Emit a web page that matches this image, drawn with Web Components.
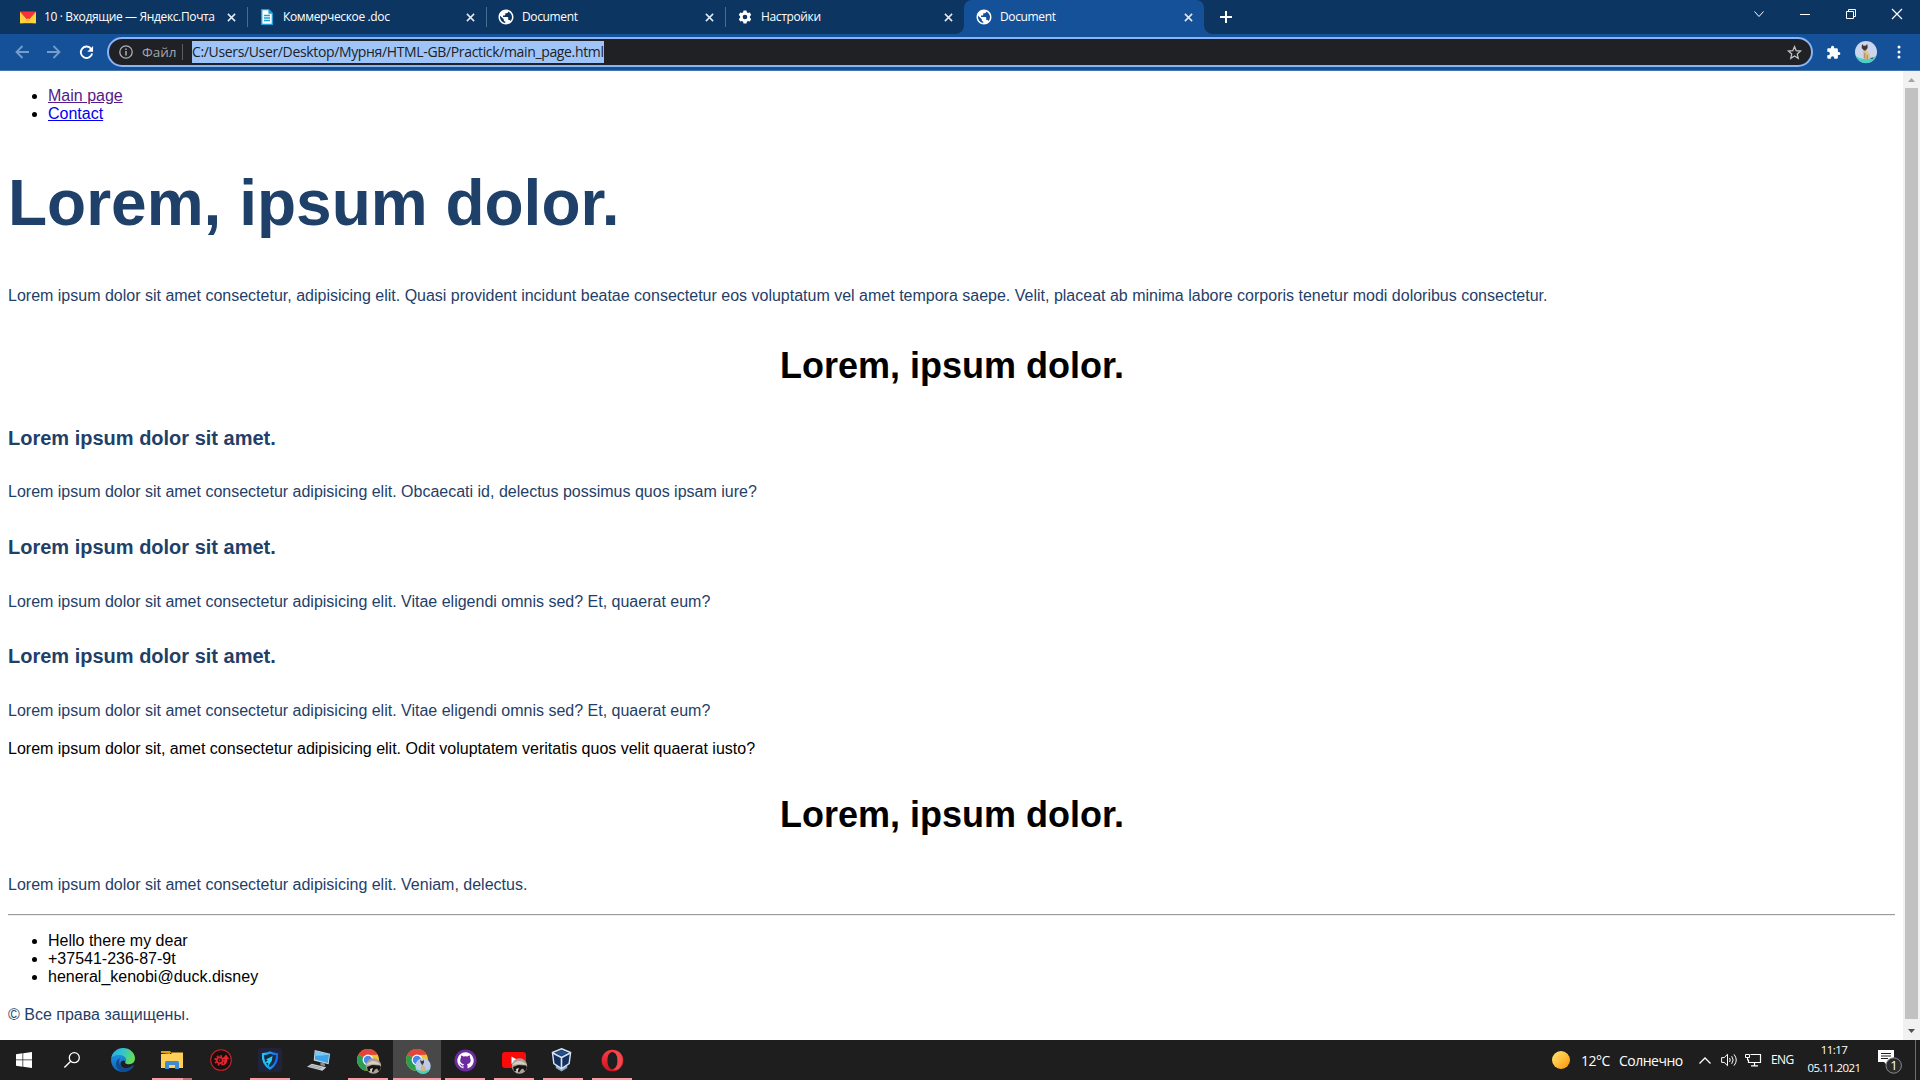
<!DOCTYPE html>
<html lang="ru">
<head>
<meta charset="utf-8">
<title>Document</title>
<style>
html,body{margin:0;height:100%;overflow:hidden;background:#fff}
</style>
</head>
<body>
<desktop-screen></desktop-screen>
<script>
const UI = '"Open Sans","Noto Sans",sans-serif';
const chromeLogo = `<circle cx="12" cy="12" r="11" fill="#f7c02d"/><path d="M12 12 2.5 6.5A11 11 0 0 1 21.5 6.5L12 7z" fill="#e2453a"/><path d="M12 12 2.5 6.5A11 11 0 0 0 12 23L16.5 14.6z" fill="#2c9e54"/><path d="M2.5 6.5A11 11 0 0 1 21.5 6.5H12z" fill="#e2453a"/><circle cx="12" cy="12" r="5.4" fill="#fff"/><circle cx="12" cy="12" r="4.2" fill="#4787ee"/>`;
const photo = `<circle cx="17.5" cy="18" r="7.7" fill="#aaa097"/><path d="M10 17q7-8 15 0l-7-1z" fill="#d6cdc4"/><path d="m11 19 5-2 8 .5 1 2-2 4-2-3-2 1-2 3-2-2-3 1z" fill="#171413"/><path d="m14 21 3-1-2 5z" fill="#e9dcc8"/>`;
const ICONS = {
mail:['0 0 16 16',`<path d="M0 1h16v14H0z" fill="#fc3"/><path d="M0 1h16L8 12z" fill="#f8323a"/><path d="M0 3v12h3l5-6 5 6h3V3L8 12z" fill="#ffd33c"/>`],
doc:['0 0 16 16',`<path d="M2 0h8l4 4v12H2z" fill="#1c9fd8"/><path d="M3.4 1.3h6v3.4h3.3v10H3.4z" fill="#fff"/><path d="M5 6.5h6M5 9h6M5 11.5h6" stroke="#1c9fd8" stroke-width="1.3"/>`],
globe:['1.300 1.300 21.400 21.400',`<path fill="#fff" d="M12 2C6.480 2 2 6.480 2 12s4.480 10 10 10 10-4.480 10-10S17.520 2 12 2zm-1 17.930c-3.950-.490-7-3.850-7-7.930 0-.620.080-1.210.210-1.790L9 15v1c0 1.100.9 2 2 2v1.930zm6.900-2.540c-.260-.810-1-1.390-1.900-1.390h-1v-3c0-.550-.450-1-1-1H8v-2h2c.550 0 1-.450 1-1V7h2c1.100 0 2-.9 2-2v-.410c2.930 1.190 5 4.060 5 7.410 0 2.080-.8 3.970-2.100 5.390z"/>`],
gear:['0 0 24 24',`<path fill="#fff" fill-rule="evenodd" d="M9.5 1h5l.7 3 2 1.100 3-1 2.500 4.300-2.300 2.100v2.900l2.300 2.200-2.500 4.300-3-1-2 1.200-.7 2.900h-5l-.7-2.900-2-1.200-3 1-2.500-4.300 2.300-2.200v-2.900L1.300 8.400l2.500-4.300 3 1 2-1.100zM12 8a4 4 0 1 0 0 8 4 4 0 0 0 0-8z"/>`],
x:['0 0 10 10',`<path d="m1 1 8 8M9 1 1 9" stroke="#e4ebf3" stroke-width="1.7"/>`],
plus:['0 0 12 12',`<path d="M6 0v12M0 6h12" stroke="#fff" stroke-width="2"/>`],
chev:['0 0 10 6',`<path d="m.5.5 4.500 5 4.500-5" stroke="#fff" fill="none"/>`],
min:['0 0 10 10',`<path d="M0 5.500h10" stroke="#fff"/>`],
restore:['0 0 10 10',`<path d="M.5 2.500h7v7h-7zM2.500 2.500v-2h7v7h-2" stroke="#fff" fill="none"/>`],
close:['0 0 10 10',`<path d="m0 0 10 10M10 0 0 10" stroke="#fff" stroke-width="1.200"/>`],
back:['0 0 14 14',`<path d="M14 7H1.500M7.500 1l-6 6 6 6" stroke="#739dcb" stroke-width="1.800" fill="none"/>`],
fwd:['0 0 14 14',`<path d="M0 7h12.500M6.500 1l6 6-6 6" stroke="#739dcb" stroke-width="1.800" fill="none"/>`],
reload:['0 0 16 16',`<path d="M13 4.200A6.100 6.100 0 1 0 14 9" stroke="#fff" stroke-width="2" fill="none"/><path d="M15 1v6.200H8.800z" fill="#fff"/>`],
info:['0 0 14 14',`<circle cx="7" cy="7" r="6.200" fill="none" stroke="#aeb1b5" stroke-width="1.300"/><path d="M7 6v4.500M7 3.500v1.400" stroke="#aeb1b5" stroke-width="1.500"/>`],
star:['0 0 24 24',`<path d="m12 2.500 2.700 6.600 7 .6-5.300 4.700 1.600 7L12 17.700l-6 3.700 1.600-7-5.300-4.700 7-.6z" fill="none" stroke="#c3c5c8" stroke-width="2"/>`],
puzzle:['0 0 24 24',`<path fill="#fff" d="M20.500 11H19V7a2 2 0 0 0-2-2h-4V3.500a2.500 2.500 0 0 0-5 0V5H4a2 2 0 0 0-2 2v3.800h1.500a2.700 2.700 0 0 1 0 5.400H2V20a2 2 0 0 0 2 2h3.800v-1.500a2.700 2.700 0 0 1 5.400 0V22H17a2 2 0 0 0 2-2v-4h1.500a2.500 2.500 0 0 0 0-5z"/>`],
avatar:['0 0 22 22',`<circle cx="11" cy="11" r="11" fill="#ccd5ee"/><path d="M.7 15q5 3.500 10.300 2.800T21.300 15A11 11 0 0 1 .7 15z" fill="#4ccfc4"/><path d="M8.500 7h2.500q1 2 1.500 3.500 3.300 2.500 2.500 7.500H8.500q-1.500-4 0-11z" fill="#dcc193"/><path d="m7 3 1.500 1.800h2L12.300 3l.4 4-2.200 2.500h-1.500L6.700 7z" fill="#42372f"/><path d="M9.800 12v5.500M12.200 14v4" stroke="#8e7450" stroke-width=".8"/><path d="m14.500 17.300 4-.8-1 1.500z" fill="#4b443d"/>`],
dots:['0 0 4 14',`<circle cx="2" cy="2" r="1.500" fill="#fff"/><circle cx="2" cy="7" r="1.500" fill="#fff"/><circle cx="2" cy="12" r="1.500" fill="#fff"/>`],
win:['0 0 16 16',`<path fill="#fff" d="m0 2.200 6.500-.9v6.300H0zM7.200 1.200 16 0v7.600H7.200zM0 8.300h6.500v6.400L0 13.800zM7.200 8.300H16V16l-8.800-1.200z"/>`],
search:['0 0 16 16',`<circle cx="10.300" cy="5.700" r="5" fill="none" stroke="#fff" stroke-width="1.300"/><path d="M6.700 9.300.4 15.600" stroke="#fff" stroke-width="1.400"/>`],
edge:['0 0 24 24',`<defs><linearGradient id="a" x1="0" y1="0" x2="1" y2=".3"><stop offset="0" stop-color="#27a9e8"/><stop offset=".5" stop-color="#31c3d0"/><stop offset="1" stop-color="#63dc5a"/></linearGradient><linearGradient id="b" x1="0" y1="0" x2="0" y2="1"><stop offset="0" stop-color="#1d8fdc"/><stop offset="1" stop-color="#1160b8"/></linearGradient></defs><path d="M0 11C1 4 6 0 12 0c7 0 12 5 12 10.500 0 3.500-2.500 5.700-6 5.700-3 0-4.700-1.200-3.500-2.700C16 11.500 13 7.500 8.800 7.500 4.500 7.500 1 9 0 11z" fill="url(#a)"/><path d="M0 11.500C.5 8.500 4 7 8 7c4.500 0 7.300 2.500 7.200 5.200-.1.800-.9 1.300-.9 1.300-1.500-2-4.300-1-4.800 1.500C9 19 13 21 17 20c2-.4 3.700-1.600 4.800-2.500.8-.3 1 .2.600.8C20 22 16 24 12 24 5 24 0 18.500 0 11.500z" fill="url(#b)"/><path d="M9.300 10.200C6.500 13.500 8.500 20 15.500 20.200c2.500 0 4.300-.8 5.500-1.700.8-.5 1.500-.6 1.200.2C20 22 17 23.800 13 24 8 23.500 4.700 19.500 5 15.500c.2-2.800 2-4.600 4.300-5.300z" fill="#0e4c94"/>`],
folder:['0 0 22 18',`<path d="M0 0h9l2 2H0z" fill="#d08d06"/><path d="M0 2V0h9v3z" fill="#e09e0c"/><path d="M0 3h10l1-1.500h11V17H0z" fill="#ffcf58"/><path d="M4 18v-6.500q0-1.500 1.500-1.500h11q1.500 0 1.500 1.500V18h-4v-4H8v4z" fill="#3d8bd2"/>`],
red:['0 0 22 22',`<circle cx="11" cy="11" r="10.300" fill="#190d0e" stroke="#c8232a" stroke-width="1.100"/><circle cx="9.700" cy="11.300" r="3" fill="none" stroke="#e0242d" stroke-width="1.700"/><circle cx="9.700" cy="11.300" r="4.500" fill="none" stroke="#e0242d" stroke-width="1.700" stroke-dasharray="1.800 1.734"/><circle cx="9.700" cy="11.300" r=".8" fill="#e0242d"/><path d="M11.500 16.500q3.500-2 3-6.500H12.500l3.500-4.500 3.200 4.500h-1.900q.3 6-5.800 6.500z" fill="#e6262e"/>`],
shield:['0 0 24 24',`<rect width="24" height="24" rx="3" fill="#20243a"/><defs><linearGradient id="h"><stop stop-color="#22c6f5"/><stop offset="1" stop-color="#1466f2"/></linearGradient></defs><path d="M12 4.500q3 1.300 7 1.700.8 9.800-7 14.300-7.800-4.500-7-14.300 4-.4 7-1.700z" fill="#182a47" stroke="url(#h)" stroke-width="2.200"/><path d="M14.500 8 8 11.500l1.800.8L6.800 15l3.500-.3-.3 4 3.800-6z" fill="#25d0ef"/>`],
pc:['0 0 26 22',`<path d="m8 0 16 4-1.500 11L7 11z" fill="#cfd9e2"/><path d="m9 1.300 14 3.400-1.300 9L8 10z" fill="#3ea5e9"/><path d="m9 1.300 14 3.400-7 1L8.500 6z" fill="#79c8f7"/><path d="m14 13 4 1 1 3-5-1z" fill="#8b949b"/><path d="m5 14.500 15 3.500-4 3.800L0 17.500z" fill="#cfd4d8"/><path d="m4 15.800 12 3M2.500 17l12 3" stroke="#89929b" stroke-width=".7"/>`],
chrome1:['0 0 26 26',chromeLogo+photo],
chrome2:['0 0 26 26',chromeLogo+`<g transform="translate(10.300 10.300) scale(.7)"><circle cx="11" cy="11" r="11" fill="#bccbe9"/><path d="M1 15.500q10 3.500 20 0A11 11 0 0 1 1 15.500z" fill="#45d0c0"/><path d="M9 6q3 1 3 5 4 2 3 7H8q-1-5 1-8z" fill="#d4b583"/><path d="m7 2 2 2h1.500L12 2l.5 4-2.500 4-2.500-4z" fill="#42372f"/></g>`],
github:['0 0 24 24',`<circle cx="12" cy="12" r="11.500" fill="#6c2c9f"/><path fill="#fff" d="M12 3.500a8.500 8.500 0 0 0-2.700 16.600c.5.100.600-.2.600-.4v-1.600c-2.400.5-2.900-1-2.900-1-.4-1-.9-1.300-.9-1.300-.8-.5 0-.5 0-.5.9 0 1.300.9 1.300.9.800 1.300 2 .9 2.500.7 0-.6.300-1 .5-1.200-1.900-.2-3.900-1-3.900-4.200 0-.9.300-1.700.9-2.300-.1-.2-.4-1.100.1-2.300 0 0 .7-.2 2.300.9a8 8 0 0 1 4.300 0c1.600-1.100 2.300-.9 2.300-.9.500 1.200.2 2.100.1 2.300.6.600.9 1.400.9 2.300 0 3.300-2 4-3.900 4.200.3.300.6.800.6 1.600v2.400c0 .2.100.5.600.4A8.500 8.500 0 0 0 12 3.500z"/>`],
youtube:['0 0 26 26',`<rect x="0" y="4" width="24" height="16" rx="3" fill="#f90b0b"/><path d="m9.500 8.500 6.500 3.700-6.500 3.700z" fill="#fff"/>`+photo],
vbox:['0 0 22 24',`<path d="m5 20 6 3.500 6-3.500v-4H5z" fill="#8fa6c3"/><path d="m11 .8 9.500 3.800-1.500 11-8 5-8-5-1.500-11z" fill="#122f5d" stroke="#d6e2ef" stroke-width="1.500"/><path d="m2 5 9 4.500L20 5M11 9.500V20" fill="none" stroke="#d6e2ef" stroke-width="1.700"/><path d="m4.500 4.700 6.500-2.500 6.500 2.500L11 8z" fill="#23508a"/>`],
opera:['0 0 24 24',`<defs><linearGradient id="o" x1="0" y1="0" x2="0" y2="1"><stop stop-color="#ff3b47"/><stop offset="1" stop-color="#c8141f"/></linearGradient></defs><path fill="url(#o)" fill-rule="evenodd" d="M12 .7a11.300 11.300 0 1 0 0 22.600 11.300 11.300 0 0 0 0-22.600zm0 2.300c3.500 0 5.300 4.200 5.300 9s-1.800 9-5.300 9-5.300-4.200-5.300-9S8.500 3 12 3z"/><path d="M12 3c2-1.200 4.500-.9 6.500.5a11.300 11.300 0 0 1 0 17c-2 1.400-4.500 1.700-6.500.5 3.500 0 5.300-4.200 5.300-9S15.500 3 12 3z" fill="#ee4a50"/>`],
sun:['0 0 18 18',`<defs><linearGradient id="s" x1="0" y1="0" x2="1" y2="1"><stop stop-color="#ffe873"/><stop offset="1" stop-color="#ff9408"/></linearGradient></defs><circle cx="9" cy="9" r="9" fill="url(#s)"/>`],
up:['0 0 12 7',`<path d="m.5 6.500 5.500-5.500 5.500 5.500" fill="none" stroke="#fff" stroke-width="1.300"/>`],
sound:['0 0 17 14',`<path d="M.6 4.600h2.600L6.500 1.300v11.400L3.200 9.400H.6z" fill="none" stroke="#fff"/><path d="M8.500 5q1.500 2 0 4M10.700 3.200q3 3.800 0 7.600M13 1.400q4.500 5.600 0 11.200" fill="none" stroke="#fff"/>`],
net:['0 0 16 14',`<path d="M5.500 1.500h10v8h-12v-3M9.500 9.500v3M6 12.800h7" stroke="#fff" fill="none" stroke-width="1.200"/><path d="M.5 1.500h4v3h-4zM2.500 4.500v3" stroke="#fff" fill="none"/>`],
note:['0 0 24 24',`<path d="M0 0h16v12H10v4l-4-4H0z" fill="#fff"/><path d="M3 3.500h10M3 6h10M3 8.500h7" stroke="#1e1e1e"/><circle cx="15.700" cy="15.500" r="7.700" fill="#2b2b2b" stroke="#8b8b8b" stroke-width="1"/>`],
sup:['0 0 7 4',`<path d="M3.500 0 7 4H0z" fill="#a3a3a3"/>`],
sdown:['0 0 7 4',`<path d="M0 0h7L3.500 4z" fill="#505050"/>`]
};
const define = (name, html, after) => {
  const t = document.createElement('template');
  t.innerHTML = html;
  customElements.define(name, class extends HTMLElement {
    connectedCallback() {
      if (this.shadowRoot) return;
      this.attachShadow({mode:'open'}).append(t.content.cloneNode(true));
      if (after) after(this, this.shadowRoot);
    }
  });
};

/* ui-icon: name, w, h */
define('ui-icon', `<style>:host{display:block;flex:none}svg{display:block;width:100%;height:100%;overflow:visible}</style><svg preserveAspectRatio="none"></svg>`, (el, r) => {
  const [vb, body] = ICONS[el.getAttribute('name')];
  const s = r.querySelector('svg');
  s.setAttribute('viewBox', vb);
  s.innerHTML = body;
  el.style.width = el.getAttribute('w') + 'px';
  el.style.height = (el.getAttribute('h') || el.getAttribute('w')) + 'px';
});

define('browser-tab', `<style>
:host{display:flex;width:239px;height:34px;box-sizing:border-box;align-items:center;padding:0 11px 0 12px;color:#fff;font:12px/16px ${UI};position:relative}
.i{width:16px;display:flex;justify-content:center;margin-right:8px}
.t{flex:1;letter-spacing:-.36px;white-space:nowrap}
:host([sep])::after{content:"";position:absolute;right:-1px;top:7px;width:1px;height:20px;background:#4b6c91}
:host([active]){background:#155199;border-radius:8px 8px 0 0;width:240px}
:host([active])::before,:host([active])::after{content:"";position:absolute;bottom:0;width:8px;height:8px}
:host([active])::before{left:-8px;background:radial-gradient(circle at 0 0,#0d3562 7.500px,#155199 8px)}
:host([active])::after{right:-8px;background:radial-gradient(circle at 100% 0,#0d3562 7.500px,#155199 8px)}
</style><span class="i"><slot name="icon"></slot></span><span class="t"><slot></slot></span><ui-icon name="x" w="9"></ui-icon>`);

define('tab-strip', `<style>
:host{display:flex;height:34px;background:#0d3562;padding-left:8px;box-sizing:border-box}
.new{display:flex;align-items:center;padding-left:16px}
.ctl{margin-left:auto;display:flex;gap:36px;padding:9px 18px 0 0;height:10px;align-items:center}
</style>
<browser-tab sep><ui-icon slot="icon" name="mail" w="16" h="13"></ui-icon>10 · Входящие — Яндекс.Почта</browser-tab>
<browser-tab sep><ui-icon slot="icon" name="doc" w="16"></ui-icon>Коммерческое .doc</browser-tab>
<browser-tab sep><ui-icon slot="icon" name="globe" w="16"></ui-icon>Document</browser-tab>
<browser-tab><ui-icon slot="icon" name="gear" w="14"></ui-icon>Настройки</browser-tab>
<browser-tab active><ui-icon slot="icon" name="globe" w="16"></ui-icon>Document</browser-tab>
<span class="new"><ui-icon name="plus" w="12"></ui-icon></span>
<span class="ctl"><ui-icon name="chev" w="10" h="6"></ui-icon><ui-icon name="min" w="10"></ui-icon><ui-icon name="restore" w="10"></ui-icon><ui-icon name="close" w="10"></ui-icon></span>`);

define('nav-bar', `<style>
:host{display:flex;height:37px;box-sizing:border-box;background:#155199;border-bottom:1px solid #4576b0;padding:3px 19px 3px 15px;align-items:center;font:14px/22px ${UI}}
.nav{display:flex;gap:18px;width:92px;align-items:center}
.box{flex:1;height:30px;box-sizing:border-box;border:2px solid #8ab4f8;border-radius:15px;background:#202124;display:flex;align-items:center;padding:0 9px 0 10px}
.file{color:#a4a7ab;margin:0 0 0 9px;width:40px;font-size:13.500px}
.bar{width:1px;height:16px;background:#5b5d61;margin-right:9px}
.url{background:#9fc5f8;color:#202124;height:22px;letter-spacing:-.35px;white-space:nowrap;width:412px}
.tools{display:flex;align-items:center;padding-left:13px}
</style>
<span class="nav"><ui-icon name="back" w="14"></ui-icon><ui-icon name="fwd" w="14"></ui-icon><ui-icon name="reload" w="15"></ui-icon></span>
<div class="box"><ui-icon name="info" w="14"></ui-icon><span class="file">Файл</span><span class="bar"></span><span class="url">C:/Users/User/Desktop/Мурня/HTML-GB/Practick/main_page.html</span><ui-icon name="star" w="15" style="margin-left:auto"></ui-icon></div>
<span class="tools"><ui-icon name="puzzle" w="15"></ui-icon><ui-icon name="avatar" w="22" style="margin:0 20px 0 14px"></ui-icon><ui-icon name="dots" w="4" h="14"></ui-icon></span>`);

define('scroll-bar', `<style>
:host{display:flex;flex-direction:column;width:17px;background:#f1f1f1;align-items:center}
.b{height:17px;display:flex;align-items:center}
.thumb{width:13px;height:931px;background:#c1c1c1}
.b:last-child{margin-top:auto;height:18px}
</style><span class="b"><ui-icon name="sup" w="7" h="4"></ui-icon></span><span class="thumb"></span><span class="b"><ui-icon name="sdown" w="7" h="4"></ui-icon></span>`);

define('page-view', `<style>
:host{display:block;flex:1;padding:0 8px;background:#fff;color:#000;font:16px/17px "Liberation Sans",Arial,sans-serif}
ul{margin:16px 0 0;padding:0 0 0 40px}
li{margin-bottom:1px}
a{color:#00e}a.v{color:#551a8b}
h1,h2,h3,p{margin:0}
h1,h3,p{color:#1f4068}
h1{font-size:64px;line-height:72px;margin-top:45px}
h2{font-size:36px;line-height:41px;text-align:center;padding-left:1px}
h3{font-size:20px;line-height:22px}
p.k{color:#000}
hr{margin:21px 0 0;border:0;height:1px;background:#9a9a9a;border-bottom:1px solid #eee}
</style>
<ul><li><a class="v" href="#">Main page</a></li><li><a href="#">Contact</a></li></ul>
<h1>Lorem, ipsum dolor.</h1>
<p style="margin-top:48px">Lorem ipsum dolor sit amet consectetur, adipisicing elit. Quasi provident incidunt beatae consectetur eos voluptatum vel amet tempora saepe. Velit, placeat ab minima labore corporis tenetur modi doloribus consectetur.</p>
<h2 style="margin-top:41px">Lorem, ipsum dolor.</h2>
<h3 style="margin-top:41px">Lorem ipsum dolor sit amet.</h3>
<p style="margin-top:34px">Lorem ipsum dolor sit amet consectetur adipisicing elit. Obcaecati id, delectus possimus quos ipsam iure?</p>
<h3 style="margin-top:36px">Lorem ipsum dolor sit amet.</h3>
<p style="margin-top:35px">Lorem ipsum dolor sit amet consectetur adipisicing elit. Vitae eligendi omnis sed? Et, quaerat eum?</p>
<h3 style="margin-top:35px">Lorem ipsum dolor sit amet.</h3>
<p style="margin-top:35px">Lorem ipsum dolor sit amet consectetur adipisicing elit. Vitae eligendi omnis sed? Et, quaerat eum?</p>
<p class="k" style="margin-top:21px">Lorem ipsum dolor sit, amet consectetur adipisicing elit. Odit voluptatem veritatis quos velit quaerat iusto?</p>
<h2 style="margin-top:37px">Lorem, ipsum dolor.</h2>
<p style="margin-top:41px">Lorem ipsum dolor sit amet consectetur adipisicing elit. Veniam, delectus.</p>
<hr>
<ul><li>Hello there my dear</li><li>+37541-236-87-9t</li><li>heneral_kenobi@duck.disney</li></ul>
<p style="margin-top:21px">© Все права защищены.</p>`);

define('task-item', `<style>
:host{display:flex;width:48px;height:40px;align-items:center;justify-content:center;flex:none;box-sizing:border-box;position:relative}
:host([run])::after{content:"";position:absolute;left:4px;right:4px;bottom:0;height:2px;background:#ff99a4}
:host([multi])::after{background:linear-gradient(90deg,#ff99a4 31px,#b9707a 31px)}
:host([active]){background:#484848}
:host([active])::after{left:0;right:0}
</style><slot></slot>`);

define('task-bar', `<style>
:host{display:flex;height:40px;background:#1e1e1e;color:#fff;font:14px/18px ${UI};box-sizing:border-box;padding-right:4px}
.apps{display:flex;gap:1px}
.tray{margin-left:auto;display:flex;align-items:center;border-right:1px solid #6f6f6f}
.w{letter-spacing:-.5px;white-space:nowrap;padding-top:2px}
.clock{text-align:center;font-size:11.500px;line-height:18px;letter-spacing:-.55px;width:58px;padding-bottom:2px}
.n{position:relative;display:block;width:24px;height:24px;margin:4px 12px 0 16px}
.n b{position:absolute;left:8px;top:7px;width:16px;text-align:center;font:13px/17px ${UI}}
</style>
<div class="apps">
<task-item><ui-icon name="win" w="16"></ui-icon></task-item>
<task-item style="margin-left:-1px"><ui-icon name="search" w="16"></ui-icon></task-item>
<task-item style="margin-left:2px"><ui-icon name="edge" w="24"></ui-icon></task-item>
<task-item run multi><ui-icon name="folder" w="22" h="18"></ui-icon></task-item>
<task-item><ui-icon name="red" w="22"></ui-icon></task-item>
<task-item run><ui-icon name="shield" w="24"></ui-icon></task-item>
<task-item><ui-icon name="pc" w="25" h="21"></ui-icon></task-item>
<task-item run><ui-icon name="chrome1" w="26" style="margin:2px 0 0 1px"></ui-icon></task-item>
<task-item run active style="margin-left:0"><ui-icon name="chrome2" w="26" style="margin:2px 0 0 1px"></ui-icon></task-item>
<task-item run style="margin-left:-1px"><ui-icon name="github" w="23"></ui-icon></task-item>
<task-item run><ui-icon name="youtube" w="26" style="margin:2px 0 0 2px"></ui-icon></task-item>
<task-item run><ui-icon name="vbox" w="21" h="24" style="margin-right:3px"></ui-icon></task-item>
<task-item run><ui-icon name="opera" w="23"></ui-icon></task-item>
</div>
<div class="tray">
<ui-icon name="sun" w="18"></ui-icon>
<span class="w" style="margin-left:11px;width:38px">12°C</span>
<span class="w" style="width:80px">Солнечно</span>
<ui-icon name="up" w="12" h="7" style="margin-right:10px"></ui-icon>
<ui-icon name="sound" w="17" h="14" style="margin-right:7px"></ui-icon>
<ui-icon name="net" w="16" h="14" style="margin-right:10px"></ui-icon>
<span style="font-size:12px;letter-spacing:-.6px;width:34px;padding-bottom:1px">ENG</span>
<span class="clock">11:17<br>05.11.2021</span>
<span class="n" style="margin-left:15px;margin-right:13px"><ui-icon name="note" w="24"></ui-icon><b>1</b></span>
</div>`);

define('desktop-screen', `<style>
:host{display:flex;flex-direction:column;width:1920px;height:1080px;overflow:hidden}
.view{flex:1;display:flex;min-height:0}
</style>
<tab-strip></tab-strip><nav-bar></nav-bar>
<div class="view"><page-view></page-view><scroll-bar></scroll-bar></div>
<task-bar></task-bar>`);
</script>
</body>
</html>
